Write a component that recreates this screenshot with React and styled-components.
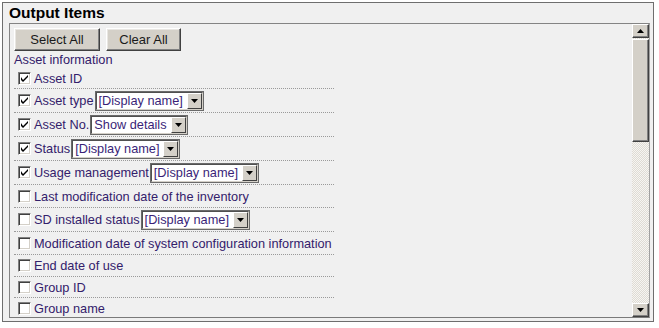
import styled, { createGlobalStyle } from "styled-components";

const GlobalStyle = createGlobalStyle`
  body {
    margin: 0;
    background: #ffffff;
    font-family: "Liberation Sans", Arial, sans-serif;
  }
`;

const Panel = styled.div`
  margin: 2px 0 0 2px;
  width: 652px;
  height: 320px;
  border: 1px solid #6e6e6e;
  background: #f0f0f0;
  padding: 0 3px 3px 6px;
  box-sizing: border-box;
  display: flex;
  flex-direction: column;
`;

const Title = styled.div`
  height: 20px;
  font-size: 15.5px;
  font-weight: bold;
  color: #000;
  line-height: 19px;
`;

const ScrollBox = styled.div`
  flex: 1;
  display: flex;
  border: 1px solid #848484;
  border-right-color: #a0a0a0;
  border-bottom-color: #7a7a7a;
  min-height: 0;
`;

const Content = styled.div`
  flex: 1;
  overflow: hidden;
  padding: 4px 0 0 4px;
`;

const ButtonRow = styled.div`
  display: flex;
  gap: 6px;
`;

const Button = styled.button`
  width: ${(p) => p.$w}px;
  height: 23px;
  padding: 0;
  background: #d4d0c8;
  border: 1px solid;
  border-color: #ffffff #404040 #404040 #ffffff;
  box-shadow: inset -1px -1px 0 #808080, inset 1px 1px 0 #e8e6e2;
  font-family: "Liberation Sans", Arial, sans-serif;
  font-size: 13px;
  color: #1a1a1a;
`;

const Group = styled.div`
  margin-top: 1px;
  font-size: 12.75px;
  color: #33206b;
  line-height: 16px;
  height: 16px;
`;

const Row = styled.div`
  width: 320px;
  display: flex;
  align-items: center;
  height: ${(p) => p.$h}px;
  padding-left: 4px;
  box-sizing: border-box;
  border-bottom: 1px dotted #9a9a9a;
  font-size: 12.75px;
  color: #33206b;
  white-space: nowrap;
`;

const Box = styled.span`
  width: 13px;
  height: 13px;
  box-sizing: border-box;
  background: #fff;
  border: 1px solid;
  border-color: #808080 #ffffff #ffffff #808080;
  box-shadow: inset 1px 1px 0 #404040, inset -1px -1px 0 #d4d0c8;
  display: inline-flex;
  align-items: center;
  justify-content: center;
  margin-right: 3px;
  flex: none;
`;

const Select = styled.span`
  width: ${(p) => p.$w}px;
  height: 20px;
  box-sizing: border-box;
  margin-left: 1px;
  display: inline-flex;
  align-items: stretch;
  border: 2px solid;
  border-color: #505050 #d4d0c8 #d4d0c8 #505050;
  outline: 1px solid #6a6a6a;
  outline-offset: -1px;
  background: #fff;
`;

const SelectText = styled.span`
  flex: 1;
  padding-left: 2px;
  line-height: 15px;
  font-size: 12.75px;
  color: #3a1f78;
`;

const ArrowBtn = styled.span`
  width: 15px;
  background: #d4d0c8;
  border: 1px solid;
  border-color: #ffffff #404040 #404040 #ffffff;
  box-sizing: border-box;
  display: flex;
  align-items: center;
  justify-content: center;
`;

const ScrollBar = styled.div`
  width: 17px;
  display: flex;
  flex-direction: column;
  background: repeating-conic-gradient(#dedbd4 0 25%, #f6f5f2 0 50%) 0 0 / 2px 2px;
`;

const ScrollButton = styled.div`
  height: 14px;
  background: #d4d0c8;
  border: 1px solid;
  border-color: #ffffff #404040 #404040 #ffffff;
  box-shadow: inset -1px -1px 0 #808080;
  box-sizing: border-box;
  display: flex;
  align-items: center;
  justify-content: center;
`;

const Thumb = styled.div`
  height: 103px;
  margin-top: 1px;
  background: #d4d0c8;
  border: 1px solid;
  border-color: #ffffff #404040 #404040 #ffffff;
  box-shadow: inset -1px -1px 0 #808080;
  box-sizing: border-box;
`;

const Track = styled.div`
  flex: 1;
`;

function Tri({ down }) {
  return (
    <svg width="7" height="4" viewBox="0 0 7 4">
      <path d={down ? "M0 0h7L3.5 4z" : "M0 4h7L3.5 0z"} fill="#000" />
    </svg>
  );
}

function Check({ on }) {
  return (
    <Box>
      {on && (
        <svg width="7" height="7" viewBox="0 0 7 7">
          <path d="M0 2v3l2 2L7 2V0L2 5z" fill="#000" />
        </svg>
      )}
    </Box>
  );
}

function Dropdown({ value, w }) {
  return (
    <Select $w={w}>
      <SelectText>{value}</SelectText>
      <ArrowBtn>
        <Tri down />
      </ArrowBtn>
    </Select>
  );
}

const items = [
  { label: "Asset ID", on: true, h: 21 },
  { label: "Asset type", on: true, sel: "[Display name]", h: 24 },
  { label: "Asset No.", on: true, sel: "Show details", w: 98, h: 24 },
  { label: "Status", on: true, sel: "[Display name]", h: 24 },
  { label: "Usage management", on: true, sel: "[Display name]", h: 24 },
  { label: "Last modification date of the inventory", h: 23 },
  { label: "SD installed status", sel: "[Display name]", h: 24 },
  { label: "Modification date of system configuration information", h: 23 },
  { label: "End date of use", h: 22 },
  { label: "Group ID", h: 21 },
  { label: "Group name", h: 21 },
];

export default function App() {
  return (
    <>
      <GlobalStyle />
      <Panel>
        <Title>Output Items</Title>
        <ScrollBox>
          <Content>
            <ButtonRow>
              <Button $w={86}>Select All</Button>
              <Button $w={75}>Clear All</Button>
            </ButtonRow>
            <Group>Asset information</Group>
            {items.map((it) => (
              <Row key={it.label} $h={it.h}>
                <Check on={it.on} />
                {it.label}
                {it.sel && <Dropdown value={it.sel} w={it.w || 109} />}
              </Row>
            ))}
          </Content>
          <ScrollBar>
            <ScrollButton>
              <Tri />
            </ScrollButton>
            <Thumb />
            <Track />
            <ScrollButton>
              <Tri down />
            </ScrollButton>
          </ScrollBar>
        </ScrollBox>
      </Panel>
    </>
  );
}
